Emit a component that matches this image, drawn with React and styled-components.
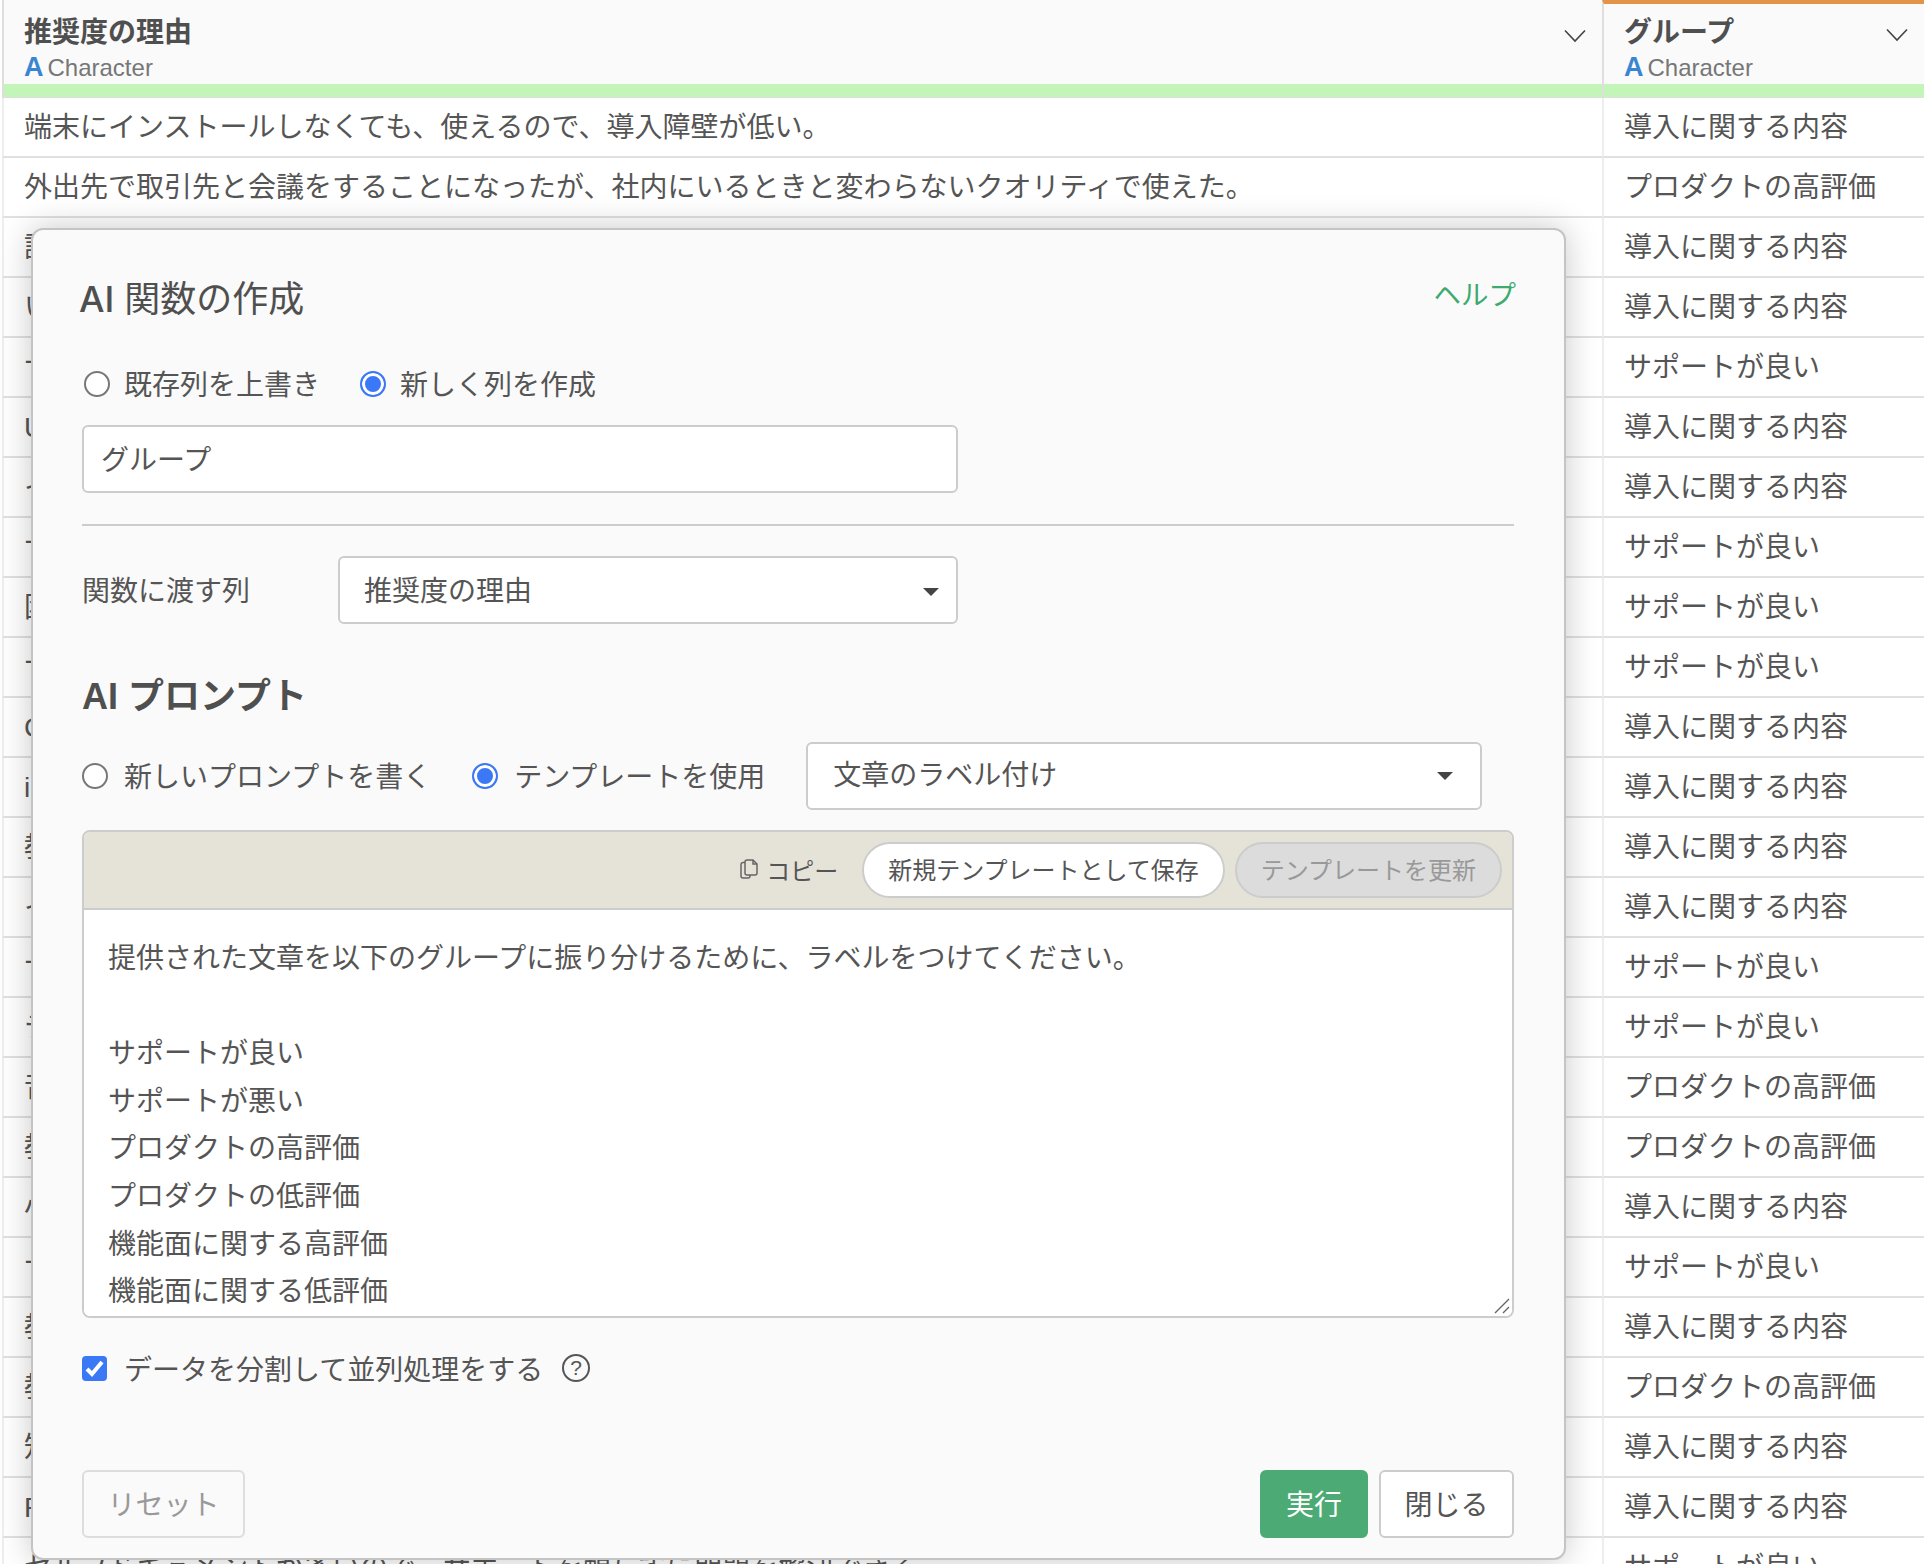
import React from "react";
import styled, { createGlobalStyle } from "styled-components";

const Global = createGlobalStyle`
  html, body { margin: 0; padding: 0; background: #fff; }
  body {
    font-family: "Liberation Sans", "Noto Sans CJK JP", sans-serif;
    color: #555;
    font-size: 28px;
  }
  * { box-sizing: border-box; }
`;

const Page = styled.div`
  position: relative;
  width: 1924px;
  height: 1564px;
  overflow: hidden;
  background: #fff;
`;

const Table = styled.div`
  display: grid;
  grid-template-columns: 1602px 322px;
`;

const HeaderCell = styled.div`
  height: 84px;
  background: #fafafa;
  position: relative;
  margin-left: ${(p) => (p.$first ? "2px" : "0")};
  border-left: 2px solid #dedede;
  border-top: ${(p) => (p.$accent ? "4px solid #e29549" : "0")};
  padding: ${(p) => (p.$accent ? "11px" : "15px")} 0 0 20px;
`;

const ColumnName = styled.div`
  font-size: 28px;
  font-weight: 700;
  line-height: 36px;
  color: #4f4f4f;
`;

const TypeLine = styled.div`
  display: flex;
  align-items: baseline;
  margin-top: 3px;
  height: 26px;
  line-height: 26px;
  font-size: 24px;
  color: #777;
  gap: 4px;
`;

const TypeGlyph = styled.span`
  font-size: 27px;
  font-weight: 700;
  color: #3a85d0;
`;

const Chevron = styled.svg`
  position: absolute;
  right: ${(p) => p.$right}px;
  top: ${(p) => p.$top}px;
  width: 22px;
  height: 14px;
  fill: none;
  stroke: #444;
  stroke-width: 1.6;
`;

const Band = styled.div`
  height: 14px;
  background: #c4f5b8;
  margin-left: ${(p) => (p.$first ? "2px" : "0")};
  border-left: 2px solid #dedede;
  border-bottom: 1px solid #dedede;
`;

const Cell = styled.div`
  height: 60px;
  margin-left: ${(p) => (p.$first ? "2px" : "0")};
  border-left: 2px solid #eee;
  border-bottom: 2px solid #e0e0e0;
  padding-left: 20px;
  line-height: 60px;
  white-space: nowrap;
  overflow: hidden;
  background: #fff;
`;

const Modal = styled.div`
  position: absolute;
  left: 31px;
  top: 228px;
  width: 1535px;
  height: 1332px;
  display: flex;
  flex-direction: column;
  padding: 43px 50px 20px 49px;
  background: #fafafa;
  border: 2px solid #c4c4c4;
  border-radius: 12px;
  box-shadow: 0 0 32px rgba(0, 0, 0, 0.22);
`;

const TitleRow = styled.div`
  display: flex;
  justify-content: space-between;
  height: 48px;
  line-height: 48px;
`;

const Title = styled.h2`
  margin: 2px 0 0 -3px;
  font-size: 36px;
  font-weight: 400;
  color: #4f4f4f;
`;

const TitleLatin = styled.span`
  font-family: "Inter", "Liberation Sans", sans-serif;
  font-weight: 500;
`;

const HelpLink = styled.a`
  margin-right: -2px;
  font-size: 27.5px;
  line-height: 46px;
  color: #3daa6f;
`;

const RadioRow = styled.div`
  display: flex;
  align-items: center;
  height: ${(p) => p.$height}px;
  margin-top: ${(p) => p.$top}px;
  padding-left: ${(p) => p.$indent || 0}px;
  gap: ${(p) => p.$gap}px;
`;

const RadioLabel = styled.label`
  display: flex;
  align-items: center;
  gap: ${(p) => p.$gap}px;
  white-space: nowrap;
`;

const Radio = styled.span`
  width: 26px;
  height: 26px;
  flex: none;
  margin-top: 2px;
  border-radius: 50%;
  background: ${(p) => (p.$on ? "#3b78f5" : "#fff")};
  border: 2px solid ${(p) => (p.$on ? "#3b78f5" : "#777")};
  box-shadow: ${(p) => (p.$on ? "inset 0 0 0 3px #fff" : "none")};
`;

const TextInput = styled.div`
  width: 876px;
  height: 68px;
  margin-top: 22px;
  padding-left: 17px;
  line-height: 68px;
  background: #fff;
  border: 2px solid #ccc;
  border-radius: 6px;
`;

const Divider = styled.hr`
  height: 2px;
  margin: 31px 0 0;
  border: 0;
  background: #ccc;
`;

const FieldRow = styled.div`
  display: flex;
  align-items: center;
  margin-top: 30px;
`;

const FieldLabel = styled.span`
  width: 256px;
  margin-top: -2px;
`;

const Select = styled.div`
  display: flex;
  align-items: center;
  justify-content: space-between;
  flex: ${(p) => (p.$grow ? "1" : "none")};
  width: ${(p) => (p.$grow ? "auto" : "620px")};
  height: 68px;
  padding: 0 ${(p) => (p.$grow ? "27px" : "17px")} ${(p) => (p.$grow ? "5px" : "2px")} ${(p) => (p.$grow ? "25px" : "24px")};
  margin: ${(p) => (p.$grow ? "2px 32px 0 0" : "0")};
  background: #fff;
  border: 2px solid #ccc;
  border-radius: 6px;
`;

const Caret = styled.span`
  width: 0;
  height: 0;
  margin-top: 5px;
  border-left: 8px solid transparent;
  border-right: 8px solid transparent;
  border-top: 8px solid #444;
`;

const Heading = styled.h3`
  margin: 50px 0 0;
  height: 46px;
  line-height: 46px;
  font-size: 36px;
  font-weight: 700;
  color: #4f4f4f;
`;

const Editor = styled.div`
  position: relative;
  margin-top: 22px;
  height: 488px;
  border: 2px solid #ccc;
  border-radius: 8px;
  overflow: hidden;
  background: #fff;
`;

const EditorBar = styled.div`
  display: flex;
  align-items: center;
  justify-content: flex-end;
  height: 78px;
  padding-right: 10px;
  gap: 10px;
  background: #e5e3d8;
  border-bottom: 2px solid #ccc;
`;

const CopyAction = styled.span`
  display: flex;
  align-items: center;
  gap: 8px;
  margin-right: 14px;
  padding-bottom: 2px;
  font-size: 24px;
`;

const PillButton = styled.span`
  height: 56px;
  padding: 0 24px 3px;
  display: flex;
  align-items: center;
  font-size: 24px;
  border-radius: 28px;
  border: 2px solid #ccc;
  background: ${(p) => (p.$off ? "#dcdcdc" : "#fff")};
  color: ${(p) => (p.$off ? "#999" : "#555")};
  white-space: nowrap;
`;

const PromptArea = styled.textarea`
  display: block;
  width: 100%;
  height: 406px;
  padding: 25px 24px 0;
  border: 0;
  outline: 0;
  overflow: hidden;
  resize: none;
  background: #fff;
  color: #555;
  font: inherit;
  font-size: 28px;
  line-height: 47.6px;
`;

const ResizeGrip = styled.svg`
  position: absolute;
  right: 2px;
  bottom: 2px;
  width: 16px;
  height: 16px;
  fill: none;
  stroke: #666;
  stroke-width: 1.4;
`;

const CheckRow = styled.div`
  display: flex;
  align-items: center;
  height: 40px;
  margin-top: 30px;
`;

const CheckBox = styled.span`
  width: 25px;
  height: 25px;
  flex: none;
  display: flex;
  align-items: center;
  justify-content: center;
  margin-right: 17px;
  border-radius: 4px;
  background: #3b78f5;
`;

const HintBadge = styled.span`
  width: 28px;
  height: 28px;
  margin-left: 19px;
  display: flex;
  align-items: center;
  justify-content: center;
  border: 2px solid #555;
  border-radius: 50%;
  font-size: 21px;
`;

const Footer = styled.div`
  display: flex;
  align-items: stretch;
  margin-top: auto;
  height: 68px;
  gap: 11px;
`;

const FooterButton = styled.span`
  display: flex;
  align-items: center;
  justify-content: center;
  width: ${(p) => p.$width}px;
  padding-bottom: 3px;
  margin-right: ${(p) => (p.$push ? "auto" : "0")};
  border-radius: 6px;
  border: 2px solid ${(p) => p.$border};
  background: ${(p) => p.$bg};
  color: ${(p) => p.$color};
`;

const INTRO = "導入に関する内容";
const PROD = "プロダクトの高評価";
const SUP = "サポートが良い";

const ROWS = [
  ["端末にインストールしなくても、使えるので、導入障壁が低い。", INTRO],
  ["外出先で取引先と会議をすることになったが、社内にいるときと変わらないクオリティで使えた。", PROD],
  ["設定が簡単で、すぐに始められる。", INTRO],
  ["いつでもどこでも利用できるので導入しやすい。", INTRO],
  ["サポートの対応が早い。", SUP],
  ["UIがわかりやすく導入しやすい。", INTRO],
  ["インストールが不要で導入が楽。", INTRO],
  ["サポートが丁寧で助かる。", SUP],
  ["困ったときにすぐ相談できる。", SUP],
  ["サポートの返信が早い。", SUP],
  ["Chromeだけで使えるので導入が楽。", INTRO],
  ["iPadでも利用できるので導入しやすい。", INTRO],
  ["教材が多く導入しやすい。", INTRO],
  ["インストールせずに使える。", INTRO],
  ["サポートが親切。", SUP],
  ["テクニカルサポートの対応が良い。", SUP],
  ["音質が良く、遅延も少ない。", PROD],
  ["教室での画面共有がしやすく便利。", PROD],
  ["小規模でも試してから導入できる。", INTRO],
  ["サポートの品質が高い。", SUP],
  ["教材が揃っていて導入しやすい。", INTRO],
  ["教室での共有機能が使いやすい。", PROD],
  ["知識がなくても導入できる。", INTRO],
  ["PCにインストールせずに導入できる。", INTRO],
  ["セルフドキュメントが多いので、サポートを頼らずに問題を解決できる。", SUP],
];

const PROMPT = [
  "提供された文章を以下のグループに振り分けるために、ラベルをつけてください。",
  "",
  "サポートが良い",
  "サポートが悪い",
  "プロダクトの高評価",
  "プロダクトの低評価",
  "機能面に関する高評価",
  "機能面に関する低評価",
].join("\n");

const ChevronIcon = (props) => (
  <Chevron viewBox="0 0 22 14" {...props}>
    <path d="M1 1.5 L11 12 L21 1.5" />
  </Chevron>
);

const CopyIcon = () => (
  <svg width="18" height="20" viewBox="0 0 18 20" fill="none" stroke="#666" strokeWidth="1.5">
    <path d="M5 3.5 H3 a2 2 0 0 0 -2 2 V17 a2 2 0 0 0 2 2 H8 a2 2 0 0 0 2 -2 V16" />
    <path d="M5 3 a2 2 0 0 1 2 -2 H13 L17 5 V14 a2 2 0 0 1 -2 2 H7 a2 2 0 0 1 -2 -2 Z" />
    <path d="M13 1 V5 H17" />
  </svg>
);

const CheckMark = () => (
  <svg width="19" height="17" viewBox="0 0 19 17" fill="none" stroke="#fff" strokeWidth="4">
    <path d="M2 9 L7 14 L17 2" />
  </svg>
);

export default function App() {
  return (
    <Page>
      <Global />
      <Table>
        <HeaderCell $first>
          <ColumnName>推奨度の理由</ColumnName>
          <TypeLine>
            <TypeGlyph>A</TypeGlyph>Character
          </TypeLine>
          <ChevronIcon $right={16} $top={29} />
        </HeaderCell>
        <HeaderCell $accent>
          <ColumnName>グループ</ColumnName>
          <TypeLine>
            <TypeGlyph>A</TypeGlyph>Character
          </TypeLine>
          <ChevronIcon $right={16} $top={24} />
        </HeaderCell>
        <Band $first />
        <Band />
        {ROWS.map(([reason, group], i) => (
          <React.Fragment key={i}>
            <Cell $first>{reason}</Cell>
            <Cell>{group}</Cell>
          </React.Fragment>
        ))}
      </Table>

      <Modal>
        <TitleRow>
          <Title>
            <TitleLatin>AI</TitleLatin> 関数の作成
          </Title>
          <HelpLink>ヘルプ</HelpLink>
        </TitleRow>

        <RadioRow $top={42} $height={40} $indent={2} $gap={40}>
          <RadioLabel $gap={14}>
            <Radio />
            既存列を上書き
          </RadioLabel>
          <RadioLabel $gap={14}>
            <Radio $on />
            新しく列を作成
          </RadioLabel>
        </RadioRow>

        <TextInput>グループ</TextInput>
        <Divider />

        <FieldRow>
          <FieldLabel>関数に渡す列</FieldLabel>
          <Select>
            推奨度の理由
            <Caret />
          </Select>
        </FieldRow>

        <Heading>AI プロンプト</Heading>

        <RadioRow $top={21} $height={67} $gap={41}>
          <RadioLabel $gap={16}>
            <Radio />
            新しいプロンプトを書く
          </RadioLabel>
          <RadioLabel $gap={16}>
            <Radio $on />
            テンプレートを使用
          </RadioLabel>
          <Select $grow>
            文章のラベル付け
            <Caret />
          </Select>
        </RadioRow>

        <Editor>
          <EditorBar>
            <CopyAction>
              <CopyIcon />
              コピー
            </CopyAction>
            <PillButton>新規テンプレートとして保存</PillButton>
            <PillButton $off>テンプレートを更新</PillButton>
          </EditorBar>
          <PromptArea readOnly defaultValue={PROMPT} />
          <ResizeGrip viewBox="0 0 16 16">
            <path d="M1 15 L15 1 M9 15 L15 9" />
          </ResizeGrip>
        </Editor>

        <CheckRow>
          <CheckBox>
            <CheckMark />
          </CheckBox>
          データを分割して並列処理をする
          <HintBadge>?</HintBadge>
        </CheckRow>

        <Footer>
          <FooterButton $push $width={163} $border="#ddd" $bg="#fafafa" $color="#999">
            リセット
          </FooterButton>
          <FooterButton $width={108} $border="#4caa74" $bg="#4caa74" $color="#fff">
            実行
          </FooterButton>
          <FooterButton $width={135} $border="#ccc" $bg="#fff" $color="#555">
            閉じる
          </FooterButton>
        </Footer>
      </Modal>
    </Page>
  );
}
